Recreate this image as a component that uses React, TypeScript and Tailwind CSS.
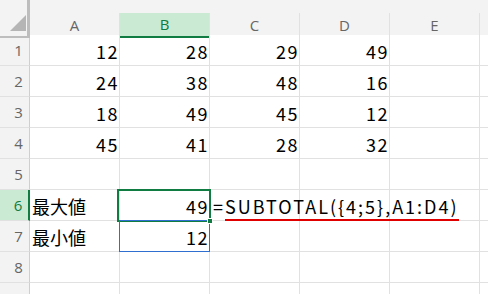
import React from 'react';

const cols = ['A', 'B', 'C', 'D', 'E'];

const rows: (string | number | null)[][] = [
  [12, 28, 29, 49, null],
  [24, 38, 48, 16, null],
  [18, 49, 45, 12, null],
  [45, 41, 28, 32, null],
  [null, null, null, null, null],
  ['最大値', 49, null, null, null],
  ['最小値', 12, null, null, null],
  [null, null, null, null, null],
  [null, null, null, null, null],
];

const font = { fontFamily: '"Noto Sans CJK JP", "Noto Sans", sans-serif' };
const headFont = { fontFamily: '"Open Sans", "Noto Sans", sans-serif' };

const App = () => {
  return (
    <div className="w-[488px] h-[294px] overflow-hidden bg-white" style={font}>
      {/* top strip */}
      <div className="flex h-[13px] bg-[#f3f3f3]">
        <div className="w-[30px] h-full border-r-[3px] border-[#bdbdbd] shrink-0" />
      </div>

      {/* column headers */}
      <div className="grid grid-cols-[30px_90px_90px_90px_90px_90px_1fr] h-[22px] bg-[#f3f3f3]">
        <div className="relative border-r-[3px] border-b-2 border-[#bdbdbd]">
          <svg className="absolute left-[10px] top-[2px]" width="16" height="16" viewBox="0 0 16 16">
            <polygon points="16,0 16,16 0,16" fill="#b5b5b5" />
          </svg>
        </div>
        {cols.map((c) => (
          <div
            key={c}
            className={`flex items-center justify-center border-r text-[15px] ${
              c === 'B'
                ? 'bg-[#caead4] text-[#107c41] border-[#e1e1e1] border-b-2 border-b-[#107c41]'
                : 'text-[#666666] border-[#e1e1e1]'
            }`}
            style={headFont}
          >
            {c}
          </div>
        ))}
        <div />
      </div>

      {/* body */}
      {rows.map((r, ri) => (
        <div key={ri} className="grid grid-cols-[30px_90px_90px_90px_90px_90px_1fr] h-[31px]">
          <div
            className={`flex items-center justify-center pl-2 text-[15px] border-b ${
              ri === 5
                ? 'bg-[#caead4] text-[#107c41] border-r-2 border-r-[#107c41] border-b-[#e1e1e1]'
                : 'bg-[#f3f3f3] text-[#666666] border-r border-r-[#cfcfcf] border-b-[#e1e1e1]'
            }`}
            style={headFont}
          >
            {ri < 8 ? ri + 1 : ''}
          </div>
          {r.map((v, ci) => (
            <div
              key={ci}
              className={`relative flex items-end pb-[1px] text-[18px] text-black border-r border-b border-[#e1e1e1] ${
                typeof v === 'number' ? 'justify-end pr-0 tracking-[1.5px]' : 'justify-start pl-[2px]'
              }`}
            >
              {v !== null && <span className="leading-[26px]">{v}</span>}
              {ri === 5 && ci === 1 && (
                <>
                  <div className="absolute left-[-3px] top-[-1px] w-[94px] h-[33px] border-2 border-[#107c41]" />
                  <div className="absolute right-[-4px] bottom-[-4px] w-[6px] h-[6px] bg-[#107c41] border border-white z-10" />
                </>
              )}
              {ri === 6 && ci === 1 && (
                <div className="absolute left-[-1px] top-[-1px] w-[91px] h-[32px] border border-[#2f6fd0]" />
              )}
              {ri === 5 && ci === 2 && (
                <span className="absolute left-[3px] bottom-[1px] leading-[26px] whitespace-nowrap tracking-[2px] z-20">
                  =<span className="border-b-2 border-[#e00000]">SUBTOTAL({'{'}4;5{'}'},A1:D4)</span>
                </span>
              )}
            </div>
          ))}
          <div className="border-b border-[#e1e1e1]" />
        </div>
      ))}
    </div>
  );
};

export default App;
